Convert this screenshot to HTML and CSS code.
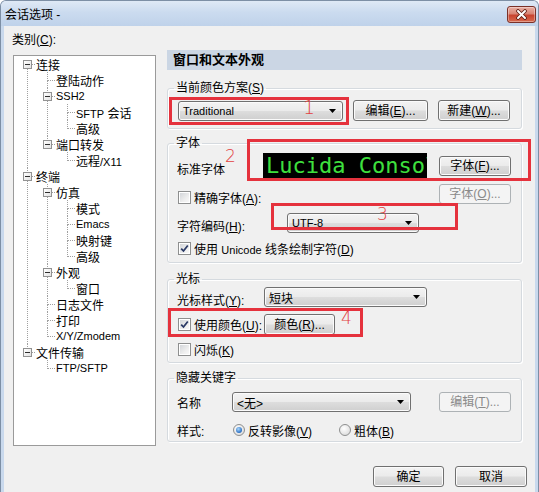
FILE: index.html
```html
<!DOCTYPE html>
<html lang="zh-CN">
<head>
    <meta charset="UTF-8">
    <title>会话选项</title>
    <link rel="stylesheet" href="styles.css">
</head>
<body>
<div class="window">
    <div class="titlebar">
        <span class="title">会话选项 -</span>
        <button class="close-btn" title="关闭">
            <svg width="13" height="11" viewBox="0 0 13 11">
                <path d="M3 2 L10 9 M10 2 L3 9" stroke="#5a1c14" stroke-width="3.6" stroke-linecap="round"/>
                <path d="M3 2 L10 9 M10 2 L3 9" stroke="#fff" stroke-width="2" stroke-linecap="round"/>
            </svg>
        </button>
    </div>

    <div class="client">
        <div class="main">
            <!-- category tree -->
            <div class="left-pane">
                <div class="cat-label">类别(<u>C</u>):</div>
                <ul class="tree">
                    <li>
                        <div class="row"><span class="twig"><i class="exp"></i></span><span>连接</span></div>
                        <ul>
                            <li><div class="row"><span class="twig"></span><span>登陆动作</span></div></li>
                            <li>
                                <div class="row"><span class="twig"><i class="exp"></i></span><span class="lat">SSH2</span></div>
                                <ul>
                                    <li><div class="row"><span class="twig"></span><span><span class="lat">SFTP</span> 会话</span></div></li>
                                    <li><div class="row"><span class="twig"></span><span>高级</span></div></li>
                                </ul>
                            </li>
                            <li>
                                <div class="row"><span class="twig"><i class="exp"></i></span><span>端口转发</span></div>
                                <ul>
                                    <li><div class="row"><span class="twig"></span><span>远程<span class="lat">/X11</span></span></div></li>
                                </ul>
                            </li>
                        </ul>
                    </li>
                    <li>
                        <div class="row"><span class="twig"><i class="exp"></i></span><span>终端</span></div>
                        <ul>
                            <li>
                                <div class="row"><span class="twig"><i class="exp"></i></span><span>仿真</span></div>
                                <ul>
                                    <li><div class="row"><span class="twig"></span><span>模式</span></div></li>
                                    <li><div class="row"><span class="twig"></span><span class="lat">Emacs</span></div></li>
                                    <li><div class="row"><span class="twig"></span><span>映射键</span></div></li>
                                    <li><div class="row"><span class="twig"></span><span>高级</span></div></li>
                                </ul>
                            </li>
                            <li>
                                <div class="row"><span class="twig"><i class="exp"></i></span><span>外观</span></div>
                                <ul>
                                    <li><div class="row"><span class="twig"></span><span>窗口</span></div></li>
                                </ul>
                            </li>
                            <li><div class="row"><span class="twig"></span><span>日志文件</span></div></li>
                            <li><div class="row"><span class="twig"></span><span>打印</span></div></li>
                            <li><div class="row"><span class="twig"></span><span class="lat">X/Y/Zmodem</span></div></li>
                        </ul>
                    </li>
                    <li>
                        <div class="row"><span class="twig"><i class="exp"></i></span><span>文件传输</span></div>
                        <ul>
                            <li><div class="row"><span class="twig"></span><span class="lat">FTP/SFTP</span></div></li>
                        </ul>
                    </li>
                </ul>
            </div>

            <!-- settings page -->
            <div class="right-pane">
                <div class="page-title">窗口和文本外观</div>

                <fieldset class="group g-scheme">
                    <legend>当前颜色方案(<u>S</u>)</legend>
                    <div class="gbody">
                        <div class="line line-scheme">
                            <div class="combo combo-scheme"><span class="lat">Traditional</span><svg class="arrow" width="7" height="4" viewBox="0 0 7 4"><polygon points="0,0 7,0 3.5,4" fill="#000"/></svg></div>
                            <button class="btn btn-edit">编辑(<u>E</u>)...</button>
                            <button class="btn btn-new">新建(<u>W</u>)...</button>
                        </div>
                    </div>
                </fieldset>

                <fieldset class="group g-font">
                    <legend>字体</legend>
                    <div class="gbody">
                        <div class="line line-std">
                            <span class="lbl lbl-std">标准字体</span>
                            <div class="font-preview">Lucida Console</div>
                            <button class="btn btn-font">字体(<u>F</u>)...</button>
                        </div>
                        <div class="line line-exact">
                            <label class="check"><span class="cb"></span><span>精确字体(<u>A</u>):</span></label>
                            <button class="btn btn-font off">字体(<u>O</u>)...</button>
                        </div>
                        <div class="line line-enc">
                            <span class="lbl lbl-enc">字符编码(<u>H</u>):</span>
                            <div class="combo combo-enc"><span class="lat">UTF-8</span><svg class="arrow" width="7" height="4" viewBox="0 0 7 4"><polygon points="0,0 7,0 3.5,4" fill="#000"/></svg></div>
                        </div>
                        <div class="line line-uni">
                            <label class="check"><span class="cb on"><svg width="9" height="9" viewBox="0 0 9 9"><path d="M1.2 4.6 L3.5 7 L7.8 1.5" stroke="#2b3a66" stroke-width="1.8" fill="none"/></svg></span><span>使用 <span class="lat">Unicode</span> 线条绘制字符(<u>D</u>)</span></label>
                        </div>
                    </div>
                </fieldset>

                <fieldset class="group g-cursor">
                    <legend>光标</legend>
                    <div class="gbody">
                        <div class="line line-style">
                            <span class="lbl lbl-style">光标样式(<u>Y</u>):</span>
                            <div class="combo combo-style"><span>短块</span><svg class="arrow" width="7" height="4" viewBox="0 0 7 4"><polygon points="0,0 7,0 3.5,4" fill="#000"/></svg></div>
                        </div>
                        <div class="line line-color">
                            <label class="check check-color"><span class="cb on"><svg width="9" height="9" viewBox="0 0 9 9"><path d="M1.2 4.6 L3.5 7 L7.8 1.5" stroke="#2b3a66" stroke-width="1.8" fill="none"/></svg></span><span>使用颜色(<u>U</u>):</span></label>
                            <button class="btn btn-color">颜色(<u>R</u>)...</button>
                        </div>
                        <div class="line line-blink">
                            <label class="check"><span class="cb"></span><span>闪烁(<u>K</u>)</span></label>
                        </div>
                    </div>
                </fieldset>

                <fieldset class="group g-keyword">
                    <legend>隐藏关键字</legend>
                    <div class="gbody">
                        <div class="line line-name">
                            <span class="lbl lbl-name">名称</span>
                            <div class="combo combo-name"><span>&lt;无&gt;</span><svg class="arrow" width="7" height="4" viewBox="0 0 7 4"><polygon points="0,0 7,0 3.5,4" fill="#000"/></svg></div>
                            <button class="btn btn-font off">编辑(<u>T</u>)...</button>
                        </div>
                        <div class="line line-kstyle">
                            <span class="lbl lbl-kstyle">样式:</span>
                            <label class="radio radio-inv"><span class="rb on"><i></i></span><span>反转影像(<u>V</u>)</span></label>
                            <label class="radio"><span class="rb"></span><span>粗体(<u>B</u>)</span></label>
                        </div>
                    </div>
                </fieldset>
            </div>
        </div>

        <div class="footer">
            <button class="btn btn-ok">确定</button>
            <button class="btn btn-cancel">取消</button>
        </div>
    </div>

    <!-- red annotations drawn over the dialog -->
    <div class="mark mark-1"></div>
    <div class="mark mark-2"></div>
    <div class="mark mark-3"></div>
    <div class="mark mark-4"></div>
    <span class="mark-num num-1">1</span>
    <span class="mark-num num-2">2</span>
    <span class="mark-num num-3">3</span>
    <span class="mark-num num-4">4</span>
</div>
</body>
</html>
```

FILE: styles.css
```css
body {
    margin: 0;
    background: #fff;
    font-family: "Liberation Sans", "Noto Sans CJK SC", sans-serif;
    font-size: 12px;
    color: #000;
}
.lat {
    font-size: 11px;
}
.window {
    position: relative;
    width: 539px;
    height: 492px;
    overflow: hidden;
    display: flex;
    flex-direction: column;
    background: #c9d9ed;
    border-radius: 6px 6px 0 0;
    box-sizing: border-box;
    border: 1px solid #7d8fa5;
    border-bottom: none;
}
.titlebar {
    height: 25px;
    flex: none;
    display: flex;
    align-items: center;
    justify-content: space-between;
    padding: 0 2px 0 4px;
    background: linear-gradient(#dfe9f5, #cbdbef 45%, #bfd2ea);
}
.title {
    line-height: 16px;
    margin-top: 2px;
}
.close-btn {
    width: 29px;
    height: 17px;
    margin-top: 2px;
    padding: 0;
    display: flex;
    align-items: center;
    justify-content: center;
    border: 1px solid #7b3128;
    border-radius: 3px;
    background: linear-gradient(#eab0a4, #d88474 45%, #c8432f 55%, #d76a4e);
    box-shadow: inset 0 0 0 1px rgba(255, 255, 255, 0.35);
}
.client {
    flex: 1;
    margin: 0 3px;
    background: #f0f0f0;
}
.main {
    display: grid;
    grid-template-columns: 143px 355px;
    column-gap: 11px;
    padding-left: 9px;
}

/* tree */
.left-pane {
    padding-top: 6px;
}
.cat-label {
    height: 16px;
    line-height: 16px;
    margin: 0 0 7px -1px;
}
.tree {
    height: 391px;
    box-sizing: border-box;
    margin: 0;
    padding: 0 0 0 4px;
    list-style: none;
    background: #fff;
    border: 1px solid #9a9a9a;
}
.tree ul {
    list-style: none;
    margin: 0;
    padding: 0 0 0 20px;
}
.tree li {
    position: relative;
}
.tree li::before {
    content: "";
    position: absolute;
    left: 9px;
    top: 0;
    width: 7px;
    height: 8px;
    border-left: 1px dotted #a0a0a0;
    border-bottom: 1px dotted #a0a0a0;
}
.tree > li:first-child::before {
    top: 8px;
    height: 0;
}
.tree li:not(:last-child)::after {
    content: "";
    position: absolute;
    left: 9px;
    top: 8px;
    bottom: 0;
    border-left: 1px dotted #a0a0a0;
}
.row {
    display: flex;
    align-items: center;
    height: 16px;
    white-space: nowrap;
}
.twig {
    flex: none;
    width: 18px;
    height: 16px;
}
.exp {
    position: relative;
    z-index: 1;
    display: block;
    width: 9px;
    height: 9px;
    box-sizing: border-box;
    margin: 4px 0 0 5px;
    border: 1px solid #929292;
    background: linear-gradient(135deg, #fff, #e2e2e2);
}
.exp::after {
    content: "";
    position: absolute;
    left: 1px;
    top: 3px;
    width: 5px;
    height: 1px;
    background: #2e2e2e;
}

/* settings page */
.right-pane {
    padding-top: 24px;
}
.page-title {
    height: 20px;
    line-height: 20px;
    padding-left: 6px;
    background: #cbd6e4;
    font-weight: bold;
    font-size: 13px;
}
.group {
    margin: 7px 0 0;
    padding: 0;
    min-width: 0;
    border: 1px solid #d5dadf;
    border-radius: 3px;
    box-shadow: inset 1px 1px #fff, 1px 1px #fff;
}
.group legend {
    margin-left: 6px;
    padding: 0 2px;
    line-height: 16px;
}
.g-scheme { margin-top: 10px; }
.g-font { margin-top: 6px; }
.g-cursor { margin-top: 8px; }
.gbody {
    padding: 0 10px 0 9px;
}
.g-scheme .gbody { padding-bottom: 7px; }
.g-font .gbody { padding-bottom: 6px; }
.g-cursor .gbody { padding-bottom: 5px; }
.g-keyword .gbody { padding-bottom: 3px; }

.line {
    display: flex;
    align-items: center;
    white-space: nowrap;
}
.line-scheme { margin-top: 4px; height: 21px; }
.line-std { margin-top: 2px; height: 25px; }
.line-exact { margin-top: 6px; height: 20px; }
.line-enc { margin-top: 9px; height: 20px; }
.line-uni { margin-top: 7px; height: 16px; }
.line-style { margin-top: 0; height: 20px; }
.line-color { margin-top: 7px; height: 21px; }
.line-blink { margin-top: 6px; height: 16px; }
.line-name { margin-top: 6px; height: 20px; }
.line-kstyle { margin-top: 10px; height: 16px; }

.lbl { flex: none; }
.lbl-std { width: 86px; margin-top: 5px; }
.lbl-enc { width: 110px; margin-top: 4px; }
.lbl-style { width: 87px; margin-top: 4px; }
.lbl-name { width: 55px; }
.lbl-kstyle { width: 56px; }
.line-exact .check { margin-top: 6px; }

/* buttons and drop-downs */
.btn, .combo {
    height: 21px;
    box-sizing: border-box;
    border: 1px solid #707070;
    border-radius: 3px;
    background: linear-gradient(#f3f3f3, #ebebeb 48%, #dddddd 52%, #cfcfcf);
    box-shadow: inset 0 0 0 1px #fbfbfb;
    font: inherit;
    color: #000;
}
.btn {
    padding: 0;
    flex: none;
    line-height: 18px;
    text-align: center;
}
.btn.off {
    border-color: #adb2b5;
    background: #f4f4f4;
    box-shadow: none;
    color: #8a8a8a;
}
.btn-edit { width: 75px; margin-left: 10px; }
.btn-new { width: 72px; margin-left: 10px; }
.btn-font { width: 72px; height: 20px; margin-left: auto; }
.btn-color { width: 71px; }
.btn-ok { width: 71px; }
.btn-cancel { width: 72px; }

.combo {
    flex: none;
    height: 20px;
    display: flex;
    align-items: center;
    justify-content: space-between;
    padding: 0 6px 0 4px;
}
.combo-scheme { width: 165px; margin-left: 1px; }
.combo-enc { width: 132px; }
.combo-style { width: 163px; }
.combo-name { width: 179px; }

.font-preview {
    flex: none;
    width: 164px;
    height: 25px;
    overflow: hidden;
    white-space: nowrap;
    background: #000;
    color: #3ee03e;
    font-family: "DejaVu Sans Mono", "Liberation Mono", monospace;
    font-size: 22px;
    line-height: 25px;
    padding-left: 3px;
    box-sizing: border-box;
}

/* check boxes and radio buttons */
.check, .radio {
    display: flex;
    align-items: center;
    flex: none;
}
.check-color { width: 87px; }
.radio-inv { width: 106px; }
.cb {
    flex: none;
    width: 13px;
    height: 13px;
    box-sizing: border-box;
    margin: 0 3px 0 1px;
    border: 1px solid #8e8f8f;
    background: linear-gradient(135deg, #cfd2d6, #eeeeee 60%, #fbfbfb);
    box-shadow: inset 0 0 0 1px #fff;
    display: flex;
    align-items: center;
    justify-content: center;
}
.rb {
    flex: none;
    width: 12px;
    height: 12px;
    box-sizing: border-box;
    margin-right: 3px;
    border: 1px solid #8e8f8f;
    border-radius: 50%;
    background: radial-gradient(circle at 40% 35%, #fff, #d4d4d4);
    display: flex;
    align-items: center;
    justify-content: center;
}
.rb i {
    width: 6px;
    height: 6px;
    border-radius: 50%;
    background: radial-gradient(circle at 40% 35%, #a9d7fb, #2a6fc4 70%, #1b4e94);
}

.footer {
    display: flex;
    justify-content: flex-end;
    gap: 11px;
    margin-top: 20px;
    padding-right: 8px;
}

/* red annotations */
.mark {
    position: absolute;
    box-sizing: border-box;
    border: 3px solid #e5323d;
}
.mark-1 { left: 168px; top: 96px; width: 180px; height: 28px; }
.mark-2 { left: 246px; top: 138px; width: 284px; height: 42px; }
.mark-3 { left: 270px; top: 202px; width: 187px; height: 27px; }
.mark-4 { left: 167px; top: 307px; width: 195px; height: 29px; }
.mark-num {
    position: absolute;
    color: #e2413f;
    font-family: "DejaVu Sans", sans-serif;
    font-weight: 300;
    font-size: 17px;
    line-height: 17px;
}
.num-1 { left: 302px; top: 98px; font-size: 19px; }
.num-2 { left: 224px; top: 147px; }
.num-3 { left: 376px; top: 205px; }
.num-4 { left: 340px; top: 309px; }
```
